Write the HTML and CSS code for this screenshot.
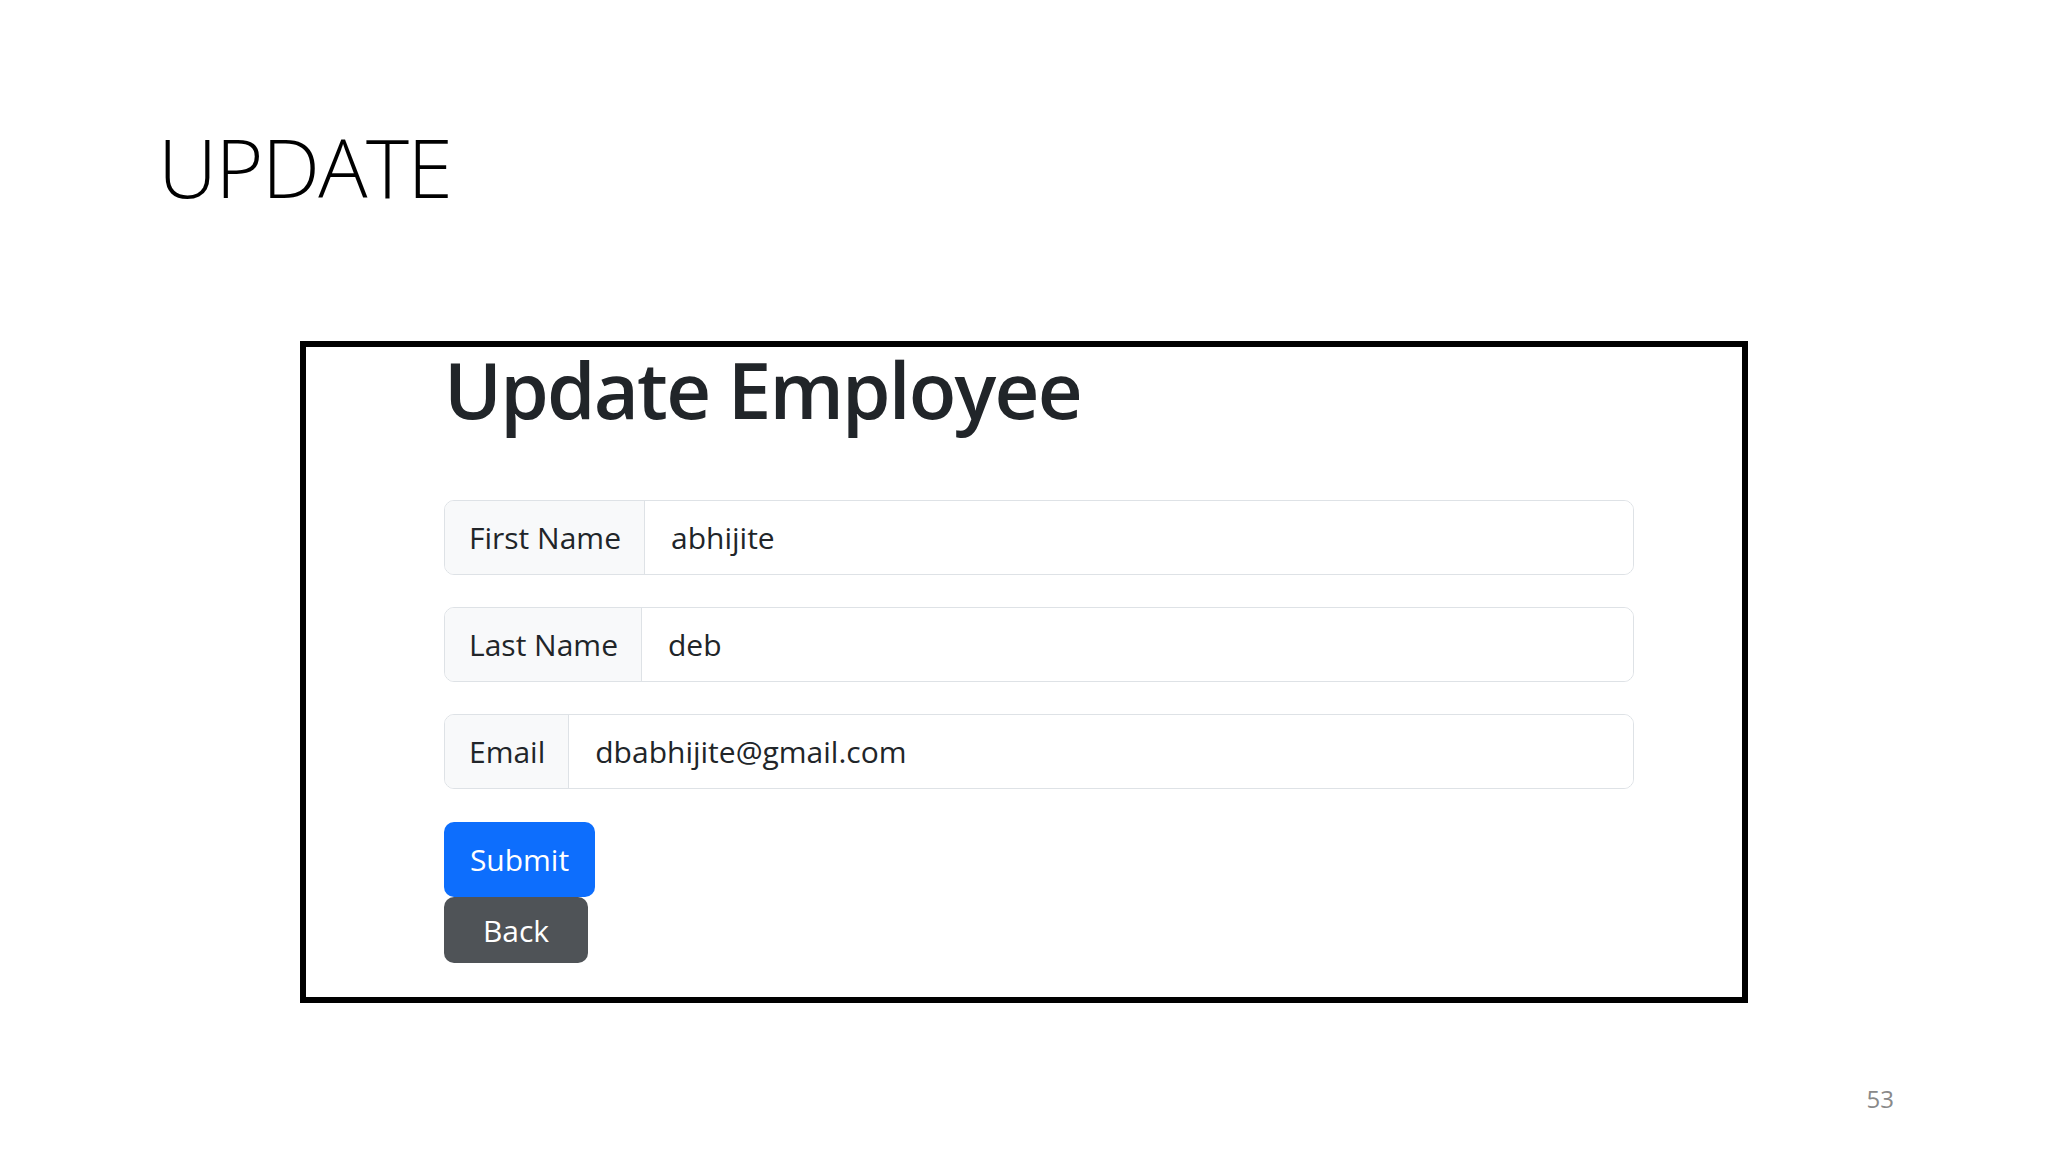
FILE: index.html
```html
<!DOCTYPE html>
<html lang="en">
<head>
<meta charset="utf-8">
<title>UPDATE</title>
<link rel="stylesheet" href="styles.css">
</head>
<body>
<div class="slide">
  <h1 class="slide-title">UPDATE</h1>
  <div class="frame">
    <h2 class="form-title">Update Employee</h2>
    <form class="form">
      <div class="input-group">
        <span class="input-label">First Name</span>
        <span class="input-value">abhijite</span>
      </div>
      <div class="input-group">
        <span class="input-label">Last Name</span>
        <span class="input-value">deb</span>
      </div>
      <div class="input-group">
        <span class="input-label">Email</span>
        <span class="input-value">dbabhijite@gmail.com</span>
      </div>
      <div class="buttons">
        <span class="btn btn-primary">Submit</span>
        <span class="btn btn-secondary">Back</span>
      </div>
    </form>
  </div>
  <div class="footer"><span class="page-num">53</span></div>
</div>
</body>
</html>
```

FILE: styles.css
```css
* { box-sizing: border-box; }
html, body {
  margin: 0;
  padding: 0;
  background: #ffffff;
}
.slide {
  width: 2048px;
  height: 1152px;
  display: flex;
  flex-direction: column;
  padding-top: 125px;
  font-family: "Open Sans", "Noto Sans", sans-serif;
}
.slide-title {
  margin: 0 0 0 158px;
  font-size: 82px;
  line-height: 82px;
  font-weight: 350;
  color: #000000;
  letter-spacing: -1.5px;
  height: 82px;
}
.frame {
  margin: 134px 0 0 300px;
  width: 1448px;
  height: 662px;
  border: 6px solid #000000;
  padding: 2px 0 0 138px;
}
.form-title {
  margin: 0;
  font-size: 78px;
  line-height: 80px;
  font-weight: 600;
  color: #212529;
  letter-spacing: -1.8px;
  height: 80px;
}
.form {
  margin-top: 71px;
  width: 1190px;
  display: flex;
  flex-direction: column;
}
.input-group {
  display: flex;
  height: 75px;
  border: 1px solid #dee2e6;
  border-radius: 10px;
  margin-bottom: 32px;
  overflow: hidden;
  font-size: 30px;
  color: #212529;
}
.input-label {
  display: flex;
  align-items: center;
  padding: 0 23px 0 24px;
  background: #f8f9fa;
  border-right: 1px solid #dee2e6;
  white-space: nowrap;
}
.input-value {
  display: flex;
  align-items: center;
  padding: 0 24px 0 26px;
  flex: 1;
  background: #ffffff;
}
.buttons {
  margin-top: 1px;
  display: flex;
  flex-direction: column;
  align-items: flex-start;
}
.btn {
  display: flex;
  align-items: center;
  justify-content: center;
  font-size: 30px;
  color: #ffffff;
  border-radius: 10px;
}
.btn-primary {
  width: 151px;
  height: 75px;
  background: #0d6efd;
}
.btn-secondary {
  width: 144px;
  height: 66px;
  background: #4f5357;
}
.footer {
  margin-top: 84px;
  display: flex;
  justify-content: flex-end;
  padding-right: 154px;
}
.page-num {
  font-size: 24px;
  line-height: 24px;
  color: #898989;
}
```
